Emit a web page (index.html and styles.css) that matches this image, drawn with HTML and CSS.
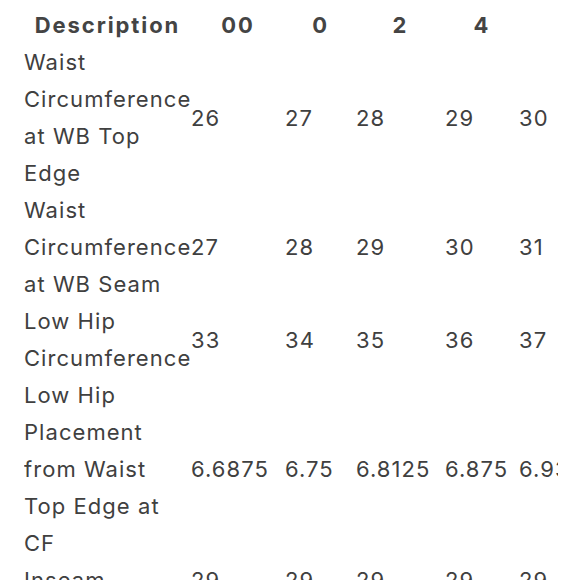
FILE: index.html
```html
<!DOCTYPE html>
<html>
<head>
<meta charset="utf-8">
<link rel="stylesheet" href="styles.css">
</head>
<body>
<div class="table-scroll">
<table class="size-table">
  <colgroup>
    <col class="c-desc">
    <col class="c1">
    <col class="c2">
    <col class="c3">
    <col class="c4">
    <col class="c5">
  </colgroup>
  <thead>
    <tr>
      <th>Description</th>
      <th>00</th>
      <th>0</th>
      <th>2</th>
      <th>4</th>
      <th></th>
    </tr>
  </thead>
  <tbody>
    <tr>
      <td>Waist<br>Circumference<br>at WB Top<br>Edge</td>
      <td>26</td><td>27</td><td>28</td><td>29</td><td>30</td>
    </tr>
    <tr>
      <td>Waist<br>Circumference<br>at WB Seam</td>
      <td>27</td><td>28</td><td>29</td><td>30</td><td>31</td>
    </tr>
    <tr>
      <td>Low Hip<br>Circumference</td>
      <td>33</td><td>34</td><td>35</td><td>36</td><td>37</td>
    </tr>
    <tr>
      <td>Low Hip<br>Placement<br>from Waist<br>Top Edge at<br>CF</td>
      <td>6.6875</td><td>6.75</td><td>6.8125</td><td>6.875</td><td>6.9375</td>
    </tr>
    <tr>
      <td>Inseam</td>
      <td>29</td><td>29</td><td>29</td><td>29</td><td>29</td>
    </tr>
  </tbody>
</table>
</div>
</body>
</html>
```

FILE: styles.css
```css
html, body {
  margin: 0;
  padding: 0;
  background: #ffffff;
  overflow: hidden;
}

body {
  width: 580px;
  height: 580px;
}

.table-scroll {
  margin: 7px 0 0 24px;
  width: 534px;
  overflow: hidden;
}

.size-table {
  border-collapse: collapse;
  border-spacing: 0;
  table-layout: fixed;
  width: 600px;
  font-family: Inter, "Noto Sans", sans-serif;
  font-size: 22px;
  line-height: 37px;
  letter-spacing: 1.05px;
  color: #404040;
}

.c-desc { width: 167px; }
.c1 { width: 94px; }
.c2 { width: 71px; }
.c3 { width: 89px; }
.c4 { width: 74px; }
.c5 { width: 105px; }

.size-table th {
  padding: 0;
  font-weight: 700;
  text-align: center;
  letter-spacing: 1.9px;
  white-space: nowrap;
  color: #444444;
}

.size-table td {
  padding: 0;
  text-align: left;
  vertical-align: middle;
  white-space: nowrap;
}
```
